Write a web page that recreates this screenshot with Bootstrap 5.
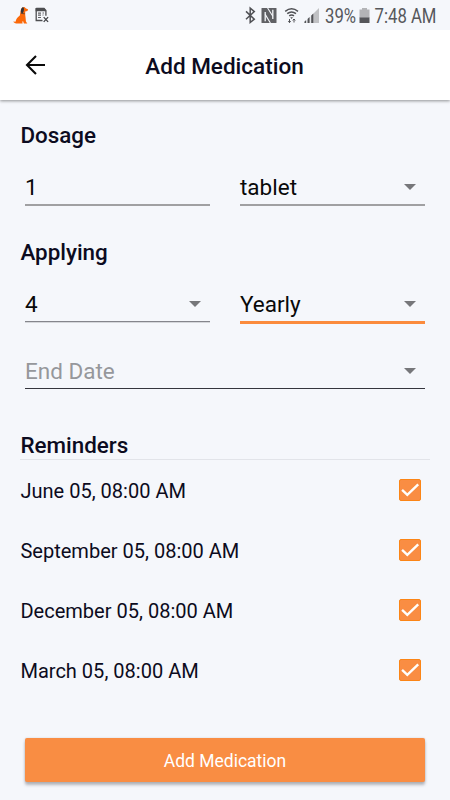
<!DOCTYPE html>
<html lang="en">
<head>
<meta charset="utf-8">
<meta name="viewport" content="width=device-width, initial-scale=1">
<title>Add Medication</title>
<link href="https://cdn.jsdelivr.net/npm/bootstrap@5.3.0/dist/css/bootstrap.min.css" rel="stylesheet">
<style>
  body { font-family: Roboto, "Liberation Sans", sans-serif; background: #f5f7fb; color: #0c0b20; height: 800px; overflow: hidden; }
  svg { display: block; flex: none; }
  .status-bar { height: 30px; }
  .app-header { height: 70px; box-shadow: 0 1px 3px rgba(0,0,0,.42); clip-path: inset(0 0 -6px 0); display: grid; grid-template-columns: 49px 1fr 50px; }
  .app-title, .section-title { font-size: 22.4px; line-height: 30px; font-weight: 500; margin: 0; }
  .app-title { font-size: 22.5px; padding-top: 1px; }
  .section-title { padding-left: .4px; }
  .reminder > span { transform: translateY(1px); }
  .form-area { padding: 20px 20px 0; }
  .fields { padding: 0 5px; display: grid; grid-template-columns: 185px 185px; column-gap: 30px; }
  .field { height: 36px; border: 0; border-bottom: 2px solid #a0a0a2; background: transparent; padding: 0 9px 0 0; font-size: 22.5px; line-height: 34px; color: #090909; }
  .field-slim { border-bottom: 1px solid #85868c; height: 35px; box-shadow: 0 1px 0 #d5d7db; }
  .field-active { height: 37px; border-bottom: 3px solid #fb8b3c; }
  .field-wide { grid-column: 1 / 3; height: 35px; margin-top: 30px; border-bottom: 1px solid #34353d; color: #96979b; }
  .gap-top { margin-top: 31px; }
  .reminder-head { height: 30px; margin-top: 41px; border-bottom: 1px solid #e2e4e9; }
  .reminder { height: 60px; font-size: 20.05px; line-height: 30px; padding: 0 9px 0 .4px; }
  .form-check-input.tick { width: 22px; height: 22px; margin: 0; border: 1px solid #fb8516; border-radius: 2px; background-color: #f98d43; background-size: 22px; }
  .tick:checked { border-color: #fb8516; background-color: #f98d43;
    background-image: url("data:image/svg+xml,%3Csvg xmlns='http://www.w3.org/2000/svg' viewBox='0 0 22 22'%3E%3Cpath d='M3.1 10.9l5.2 5L19.2 5.4' fill='none' stroke='%23fff' stroke-width='2.4'/%3E%3C/svg%3E"); }
  .btn.btn-submit { height: 44px; margin: 38px 5px 0; padding: 0; font-size: 17.5px; line-height: 46px; color: #fff; background: #f98d43; border: 0; border-radius: 2px; box-shadow: 0 3px 3px rgba(60,60,70,.35), 0 0 2px rgba(60,60,70,.2); }
</style>
<script src="https://cdn.jsdelivr.net/npm/bootstrap@5.3.0/dist/js/bootstrap.bundle.min.js"></script>
</head>
<body>
<div class="status-bar">
  <svg width="450" height="30" viewBox="0 0 450 30" role="img" aria-label="Status bar">
    <!-- dog -->
    <path d="M21 9.2l1.2-1.7 2.2-.4 1.6 1.3 2 .8-.5 1.7-2.3.5v3.3l.4 3.2.3 3.6 1.4 1.9h-3.4l-.8-2.2-.8.3.3 1.9h-6.3c-1.4 0-2.6-.9-3-1.9l2.2.2c.5-2.8 2.4-4.6 4.3-6.1z" fill="#fb6808"/>
    <path d="M22.6 7.3c-1.6.9-2.1 3.6-1.6 5.4l1.9.4c1-1.5 1.4-4.1.8-5.5z" fill="#31343a"/>
    <path d="M20.8 13.3l4 .5" stroke="#3a3535" stroke-width=".7"/>
    <!-- document -->
    <path d="M36.2 8.3h7.8l1.9 2.2v5.2M36.2 8.3v12.2h6.3" fill="none" stroke="#4d4e51" stroke-width="1.3"/>
    <path d="M35.6 8h8.6l2 3.2H35.6z" fill="#4d4e51"/>
    <path d="M38 13.2h3M42.5 13h1.5M38 15.2h3M38 17.5h3M42.5 15h1" stroke="#606165" stroke-width="1.2"/>
    <path d="M43.7 17.1l4.4 4.8m0-4.8l-4.4 4.8" stroke="#424347" stroke-width="1.3"/>
    <!-- bluetooth -->
    <path d="M246 11.4l8.3 7.7-4.1 3.4V8.2l4.1 3.4-8.3 7.6" fill="none" stroke="#505155" stroke-width="1.5"/>
    <!-- NFC -->
    <rect x="261.5" y="8" width="15" height="15" rx=".5" fill="#606165"/>
    <path d="M265.2 21.2V12M272.8 19V9.8" stroke="#f5f7fb" stroke-width="1.3"/>
    <path d="M267.6 8l5.2 8.2M265.2 14.4l5.2 8.6" stroke="#f5f7fb" stroke-width="1.1"/>
    <!-- wi-fi -->
    <path d="M285.2 11.3q6.4-5 12.8 0M287.2 13.7q4.4-3.4 8.8 0M289.2 15.9q2.4-1.7 4.8 0" fill="none" stroke="#505155" stroke-width="1.5"/>
    <path d="M290.2 17.2h2.8l-1.4 1.7z" fill="#505155"/>
    <path d="M289.5 19v3.6m-1.3-1.4l1.3 1.4 1.3-1.4M294 22.5V19m-1.3 1.4l1.3-1.4 1.3 1.4" fill="none" stroke="#505155" stroke-width="1"/>
    <!-- signal -->
    <path d="M304 23L319 8v15z" fill="#c0c1c4"/>
    <path d="M304.5 23v-1.5l1.7-1.5v3zM307.5 23v-4l2-2v6zM311.3 23v-7.5l2-2V23z" fill="#525357"/>
    <path d="M306.8 18.5V23M310.4 15V23" stroke="#f5f7fb" stroke-width=".8"/>
    <!-- battery -->
    <path d="M359.5 9.5h2.5V8h5v1.5h2.5v8.5h-10z" fill="#b3b4b7"/>
    <path d="M359.5 17.5h10V23h-10z" fill="#55565a"/>
    <g fill="#56575b" font-size="20" font-family="Roboto, sans-serif">
      <text x="325" y="23" textLength="31" lengthAdjust="spacingAndGlyphs">39%</text>
      <text x="374.5" y="23" textLength="62" lengthAdjust="spacingAndGlyphs">7:48 AM</text>
    </g>
  </svg>
</div>
<header class="app-header bg-white align-items-center">
  <a href="#" aria-label="Back" class="ps-4">
    <svg width="24" height="24" viewBox="0 0 24 24" fill="none" stroke="#0a0a0a" stroke-width="2.1"><path d="M21 12H3.2M12 3L3 12l9 9"/></svg>
  </a>
  <h1 class="app-title text-center">Add Medication</h1>
</header>
<main class="form-area d-flex flex-column">
  <h2 class="section-title">Dosage</h2>
  <div class="fields mt-3 pt-1">
    <div class="field d-flex align-items-center"><span>1</span></div>
    <div class="field d-flex justify-content-between align-items-center"><span>tablet</span><svg width="12" height="6"><path d="M0 0h12l-6 6z" fill="#76777a"/></svg></div>
  </div>
  <h2 class="section-title gap-top">Applying</h2>
  <div class="fields mt-3 pt-1">
    <div class="field field-slim d-flex justify-content-between align-items-center"><span>4</span><svg width="12" height="6"><path d="M0 0h12l-6 6z" fill="#76777a"/></svg></div>
    <div class="field field-active d-flex justify-content-between align-items-center"><span>Yearly</span><svg width="12" height="6"><path d="M0 0h12l-6 6z" fill="#76777a"/></svg></div>
    <div class="field field-wide d-flex justify-content-between align-items-center"><span>End Date</span><svg width="12" height="6"><path d="M0 0h12l-6 6z" fill="#76777a"/></svg></div>
  </div>
  <div class="reminder-head"><h2 class="section-title">Reminders</h2></div>
  <label class="reminder d-flex align-items-center justify-content-between"><span>June 05, 08:00 AM</span><input class="form-check-input tick" type="checkbox" checked></label>
  <label class="reminder d-flex align-items-center justify-content-between"><span>September 05, 08:00 AM</span><input class="form-check-input tick" type="checkbox" checked></label>
  <label class="reminder d-flex align-items-center justify-content-between"><span>December 05, 08:00 AM</span><input class="form-check-input tick" type="checkbox" checked></label>
  <label class="reminder d-flex align-items-center justify-content-between"><span>March 05, 08:00 AM</span><input class="form-check-input tick" type="checkbox" checked></label>
  <button type="button" class="btn btn-submit">Add Medication</button>
</main>
</body>
</html>
